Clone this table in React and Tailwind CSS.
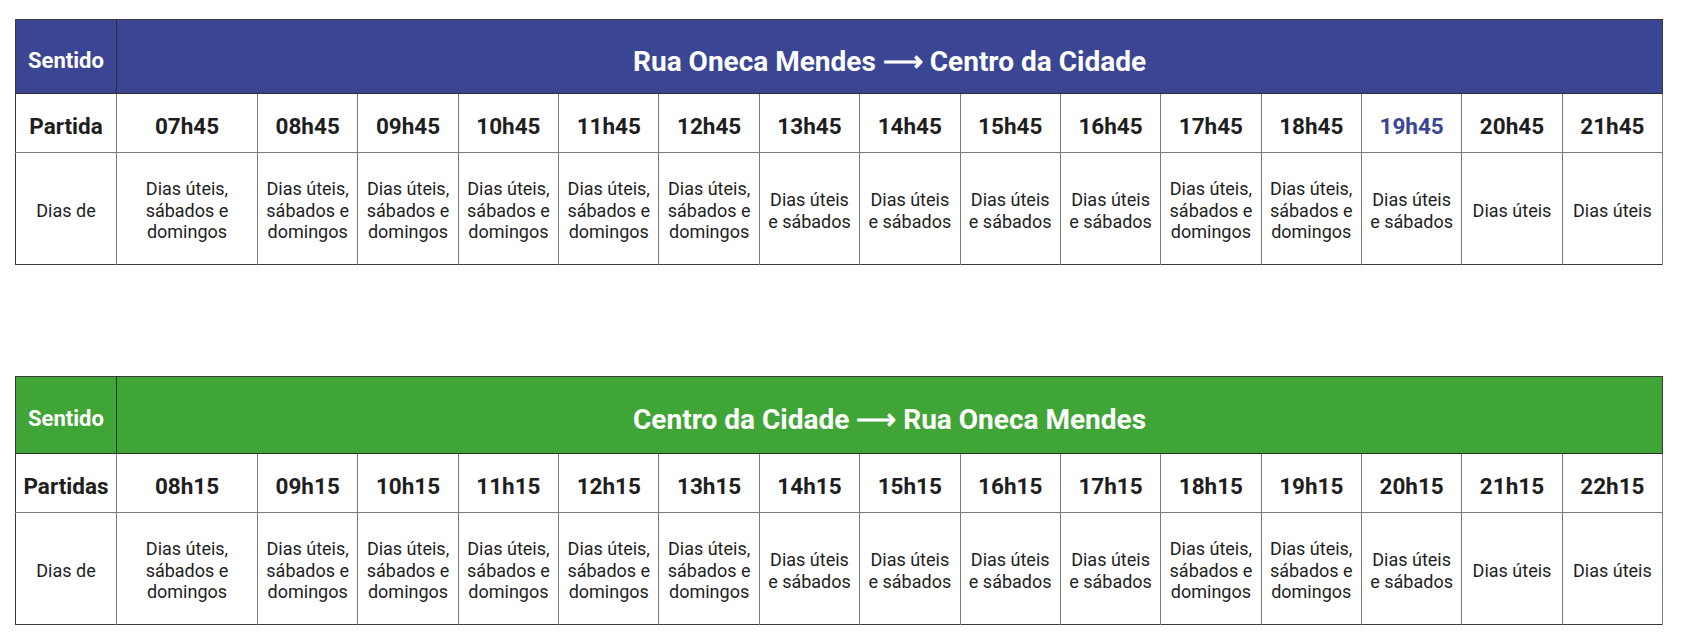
import React from 'react';

const FULL = 'Dias úteis, sábados e domingos';
const SAB = 'Dias úteis e sábados';
const UTEIS = 'Dias úteis';

const ida = [
  { hora: '07h45', dias: FULL },
  { hora: '08h45', dias: FULL },
  { hora: '09h45', dias: FULL },
  { hora: '10h45', dias: FULL },
  { hora: '11h45', dias: FULL },
  { hora: '12h45', dias: FULL },
  { hora: '13h45', dias: SAB },
  { hora: '14h45', dias: SAB },
  { hora: '15h45', dias: SAB },
  { hora: '16h45', dias: SAB },
  { hora: '17h45', dias: FULL },
  { hora: '18h45', dias: FULL },
  { hora: '19h45', dias: SAB, destaque: true },
  { hora: '20h45', dias: UTEIS },
  { hora: '21h45', dias: UTEIS },
];

const volta = [
  { hora: '08h15', dias: FULL },
  { hora: '09h15', dias: FULL },
  { hora: '10h15', dias: FULL },
  { hora: '11h15', dias: FULL },
  { hora: '12h15', dias: FULL },
  { hora: '13h15', dias: FULL },
  { hora: '14h15', dias: SAB },
  { hora: '15h15', dias: SAB },
  { hora: '16h15', dias: SAB },
  { hora: '17h15', dias: SAB },
  { hora: '18h15', dias: FULL },
  { hora: '19h15', dias: FULL },
  { hora: '20h15', dias: SAB },
  { hora: '21h15', dias: UTEIS },
  { hora: '22h15', dias: UTEIS },
];

// quebra de linha igual à da imagem
const renderDias = (dias) => {
  if (dias === FULL) {
    return (
      <>
        Dias úteis,
        <br />
        sábados e
        <br />
        domingos
      </>
    );
  }
  if (dias === SAB) {
    return (
      <>
        Dias úteis
        <br />
        e sábados
      </>
    );
  }
  return dias;
};

const Horarios = ({ cor, titulo, rotulo, partidas, headerH }) => (
  <table className="table-fixed border-collapse w-[1647px] border border-[#3a3a3a]">
    <colgroup>
      <col className="w-[101px]" />
      <col className="w-[141px]" />
      {partidas.slice(1).map((p) => (
        <col key={p.hora} className="w-[100.36px]" />
      ))}
    </colgroup>
    <tbody>
      {/* Cabeçalho */}
      <tr className={`${cor} ${headerH}`}>
        <th className="border-r border-b border-[#2e2e2e] text-white text-[22px] font-bold text-center align-middle pt-[7px]">
          Sentido
        </th>
        <th
          colSpan={15}
          className="border-b border-[#2e2e2e] text-white text-[28px] font-bold text-center align-middle pt-[10px]"
        >
          {titulo}
        </th>
      </tr>

      {/* Partidas */}
      <tr className="h-[59px]">
        <td className="border-r border-b border-[#7a7a7a] text-[22.5px] font-bold text-[#1e1e1e] text-center pt-[7px]">
          {rotulo}
        </td>
        {partidas.map((p) => (
          <td
            key={p.hora}
            className={`border-r border-b border-[#7a7a7a] text-[22.5px] font-bold text-center pt-[7px] ${
              p.destaque ? 'text-[#3a4694]' : 'text-[#1e1e1e]'
            }`}
          >
            {p.hora}
          </td>
        ))}
      </tr>

      {/* Dias */}
      <tr className="h-[112px]">
        <td className="border-r border-[#7a7a7a] text-[18px] leading-[21.5px] text-[#1e1e1e] text-center pt-1">
          Dias de
        </td>
        {partidas.map((p) => (
          <td
            key={p.hora}
            className="border-r border-[#7a7a7a] text-[18px] leading-[21.5px] text-[#1e1e1e] text-center pt-1"
          >
            {renderDias(p.dias)}
          </td>
        ))}
      </tr>
    </tbody>
  </table>
);

const App = () => {
  return (
    <div className="w-[1681px] h-[642px] bg-white font-['Roboto',sans-serif] pl-[15px] pt-[19px]">
      <div className="flex flex-col gap-[111px]">
        <Horarios
          cor="bg-[#3a4694]"
          titulo="Rua Oneca Mendes ⟶ Centro da Cidade"
          rotulo="Partida"
          partidas={ida}
          headerH="h-[74px]"
        />
        <Horarios
          cor="bg-[#3fa537]"
          titulo="Centro da Cidade ⟶ Rua Oneca Mendes"
          rotulo="Partidas"
          partidas={volta}
          headerH="h-[77px]"
        />
      </div>
    </div>
  );
};

export default App;
